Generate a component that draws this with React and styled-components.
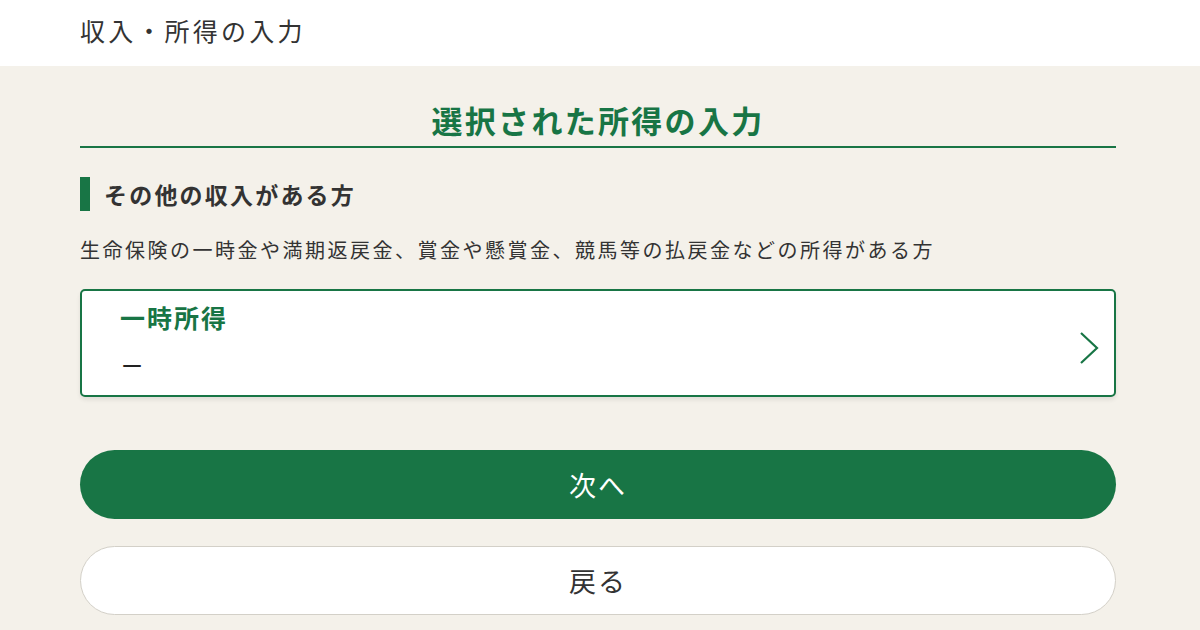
import React from 'react';
import styled, { createGlobalStyle } from 'styled-components';

const GREEN = '#187545';

const GlobalStyle = createGlobalStyle`
  html, body {
    margin: 0;
    padding: 0;
    background: #f4f1ea;
  }
  body {
    font-family: "Noto Sans CJK JP", "Noto Sans", sans-serif;
    color: #333;
  }
`;

const Page = styled.div`
  width: 1200px;
  height: 630px;
  overflow: hidden;
  background: #f4f1ea;
`;

const Header = styled.header`
  height: 66px;
  box-sizing: border-box;
  background: #fff;
  display: flex;
  align-items: center;
  padding: 0 80px 6px;
  font-size: 25px;
  letter-spacing: 3.2px;
  color: #333;
`;

const Main = styled.main`
  padding: 0 84px 0 80px;
  display: flex;
  flex-direction: column;
`;

const PageTitle = styled.h1`
  margin: 0;
  padding: 30px 0 2px;
  text-align: center;
  font-size: 31px;
  font-weight: 700;
  letter-spacing: 2.3px;
  color: ${GREEN};
  border-bottom: 2px solid ${GREEN};
  line-height: 48px;
`;

const SectionTitle = styled.h2`
  margin: 29px 0 0;
  display: flex;
  align-items: center;
  gap: 14px;
  font-size: 23px;
  font-weight: 700;
  letter-spacing: 2.2px;
  color: #333;
  line-height: 34px;
  &::before {
    content: '';
    width: 10px;
    height: 34px;
    background: ${GREEN};
  }
`;

const Description = styled.p`
  margin: 24px 0 0;
  font-size: 20px;
  letter-spacing: 2.5px;
  line-height: 30px;
  color: #333;
`;

const Card = styled.button`
  margin-top: 24px;
  height: 108px;
  box-sizing: border-box;
  border: 2px solid ${GREEN};
  border-radius: 5px;
  background: #fff;
  box-shadow: 0 3px 4px rgba(0, 0, 0, 0.08);
  display: flex;
  align-items: stretch;
  justify-content: space-between;
  padding: 10px 14px 0 38px;
  font-family: inherit;
  text-align: left;
  cursor: pointer;
`;

const CardBody = styled.div`
  display: flex;
  flex-direction: column;
  gap: 15px;
`;

const CardLabel = styled.span`
  font-size: 25px;
  font-weight: 700;
  letter-spacing: 2px;
  color: ${GREEN};
  line-height: 32px;
`;

const CardValue = styled.span`
  font-size: 22px;
  color: #222;
  padding-left: 1px;
  line-height: 32px;
`;

const ChevronWrap = styled.span`
  align-self: center;
  display: flex;
`;

const Buttons = styled.div`
  margin-top: 53px;
  display: flex;
  flex-direction: column;
  gap: 27px;
`;

const PillButton = styled.button`
  height: 69px;
  border-radius: 35px;
  box-sizing: border-box;
  font-family: inherit;
  font-size: 27px;
  letter-spacing: 2px;
  cursor: pointer;
  background: ${(p) => (p.$primary ? GREEN : '#fff')};
  color: ${(p) => (p.$primary ? '#fff' : '#333')};
  border: ${(p) => (p.$primary ? 'none' : '1px solid #d3d0c8')};
`;

const Chevron = () => (
  <svg width="22" height="34" viewBox="0 0 22 34" fill="none">
    <path d="M3 2 L19 17 L3 32" stroke={GREEN} strokeWidth="2.2" />
  </svg>
);

export default function App() {
  return (
    <Page>
      <GlobalStyle />
      <Header>収入・所得の入力</Header>
      <Main>
        <PageTitle>選択された所得の入力</PageTitle>
        <SectionTitle>その他の収入がある方</SectionTitle>
        <Description>
          生命保険の一時金や満期返戻金、賞金や懸賞金、競馬等の払戻金などの所得がある方
        </Description>
        <Card>
          <CardBody>
            <CardLabel>一時所得</CardLabel>
            <CardValue>ー</CardValue>
          </CardBody>
          <ChevronWrap>
            <Chevron />
          </ChevronWrap>
        </Card>
        <Buttons>
          <PillButton $primary>次へ</PillButton>
          <PillButton>戻る</PillButton>
        </Buttons>
      </Main>
    </Page>
  );
}
